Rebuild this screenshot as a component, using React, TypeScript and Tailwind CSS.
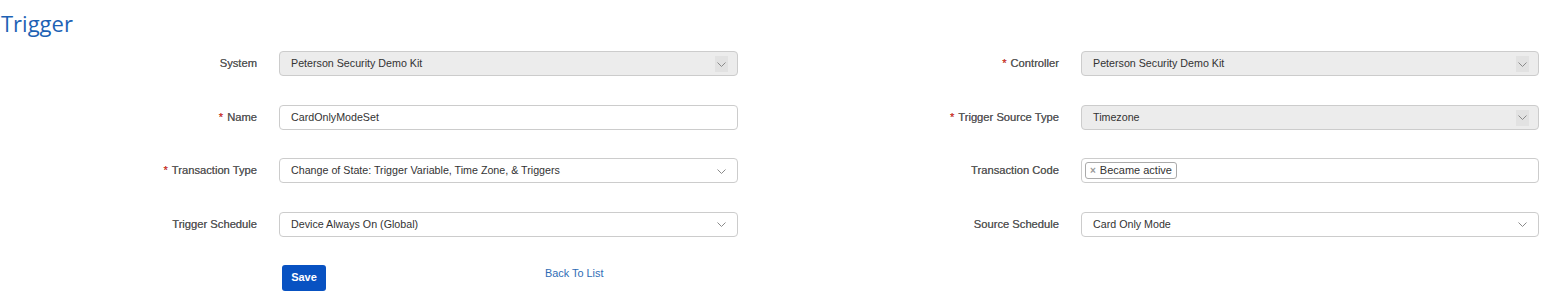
import { ReactNode } from "react";

const labelCls =
  "w-[257px] shrink-0 text-right text-[11.2px] text-[#5a5a5a] [text-shadow:0_0_0.4px_#5a5a5a]";

function Label({ text, required }: { text: string; required?: boolean }) {
  return (
    <div className={labelCls}>
      {required && <span className="text-[#e5332a] mr-[4px]">*</span>}
      {text}
    </div>
  );
}

function Chevron({ boxed }: { boxed?: boolean }) {
  return (
    <span
      className={`absolute right-[9px] top-[4px] w-[13px] h-[16px] flex items-center justify-center ${
        boxed ? "bg-[#e2e2e2]" : ""
      }`}
    >
      <svg width="9" height="5" viewBox="0 0 9 5" fill="none">
        <path d="M0.5 0.5L4.5 4.5L8.5 0.5" stroke="#8a8a8a" strokeWidth="1" />
      </svg>
    </span>
  );
}

function Field({
  children,
  disabled,
  select,
  width,
}: {
  children: ReactNode;
  disabled?: boolean;
  select?: boolean;
  width: string;
}) {
  return (
    <div
      className={`relative h-[25px] ${width} shrink-0 rounded-[4px] border border-[#cccccc] flex items-center pl-[11px] text-[10.7px] text-[#333333] ${
        disabled ? "bg-[#ececec]" : "bg-white"
      }`}
    >
      {children}
      {select && <Chevron boxed={disabled} />}
    </div>
  );
}

function Row({ children }: { children: ReactNode }) {
  return <div className="flex items-center h-[25px] gap-[22px]">{children}</div>;
}

export default function App() {
  return (
    <div
      className="w-[1556px] h-[304px] bg-white"
      style={{ fontFamily: '"Liberation Sans", Arial, sans-serif' }}
    >
      <h1
        className="pl-[1px] pt-[5px] h-[41px] text-[22px] leading-[36px] text-[#1d62b4]"
        style={{ fontFamily: '"Open Sans", sans-serif' }}
      >
        Trigger
      </h1>
      <div className="mt-[10px] flex">
        {/* Left column */}
        <div className="w-[802px] flex flex-col gap-[28.5px]">
          <Row>
            <Label text="System" />
            <Field disabled select width="w-[459px]">
              Peterson Security Demo Kit
            </Field>
          </Row>
          <Row>
            <Label text="Name" required />
            <Field width="w-[459px]">CardOnlyModeSet</Field>
          </Row>
          <Row>
            <Label text="Transaction Type" required />
            <Field select width="w-[459px]">
              Change of State: Trigger Variable, Time Zone, &amp; Triggers
            </Field>
          </Row>
          <Row>
            <Label text="Trigger Schedule" />
            <Field select width="w-[459px]">
              Device Always On (Global)
            </Field>
          </Row>
          <div className="flex items-start ml-[282px] -mt-[0.5px]">
            <button className="w-[44px] h-[26px] rounded-[3px] bg-[#0852c2] text-white text-[11px] font-bold">
              Save
            </button>
            <a className="ml-[219px] mt-0 text-[10.9px] text-[#2f6cb5]" href="#">
              Back To List
            </a>
          </div>
        </div>
        {/* Right column */}
        <div className="flex flex-col gap-[28.5px]">
          <Row>
            <Label text="Controller" required />
            <Field disabled select width="w-[458px]">
              Peterson Security Demo Kit
            </Field>
          </Row>
          <Row>
            <Label text="Trigger Source Type" required />
            <Field disabled select width="w-[458px]">
              Timezone
            </Field>
          </Row>
          <Row>
            <Label text="Transaction Code" />
            <div className="h-[25px] w-[458px] shrink-0 rounded-[4px] border border-[#cccccc] bg-white flex items-center pl-[3px]">
              <span className="h-[17px] flex items-center gap-[4px] border border-[#aaaaaa] rounded-[3px] px-[4px] text-[11px] text-[#333333]">
                <span className="text-[10px] font-bold text-[#999999] leading-none">×</span>
                Became active
              </span>
            </div>
          </Row>
          <Row>
            <Label text="Source Schedule" />
            <Field select width="w-[458px]">
              Card Only Mode
            </Field>
          </Row>
        </div>
      </div>
    </div>
  );
}
